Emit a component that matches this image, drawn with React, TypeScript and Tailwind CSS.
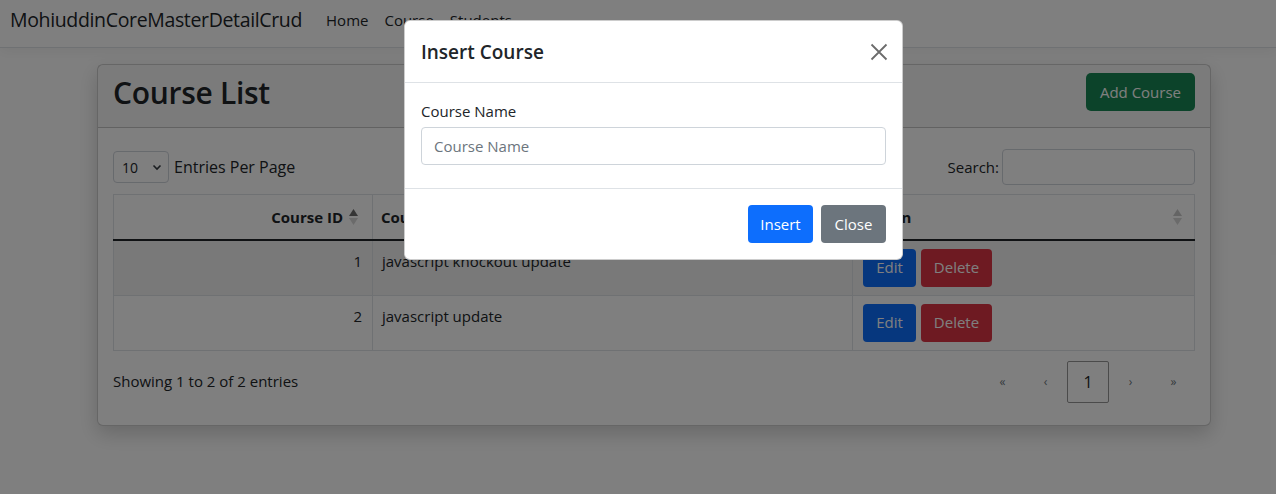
import React from "react";

const font = { fontFamily: '"Open Sans", "Noto Sans", sans-serif' };

function SortIcon({ active }: { active?: "asc" | "desc" }) {
  return (
    <svg width="9" height="20" viewBox="0 0 9 20" className="shrink-0">
      <path d="M4.5 2 L9 9 L0 9 Z" fill={active === "asc" ? "#6b6b6b" : "#c9c9c9"} />
      <path d="M4.5 18 L9 11 L0 11 Z" fill={active === "desc" ? "#6b6b6b" : "#d6d6d6"} />
    </svg>
  );
}

const rows = [
  { id: 1, name: "javascript knockout update" },
  { id: 2, name: "javascript update" },
];

export default function App() {
  return (
    <div className="relative w-[1276px] h-[494px] overflow-hidden bg-white text-[#212529]" style={font}>
      {/* navbar */}
      <nav className="h-[48px] flex items-start pt-[5px] pl-[10px] bg-white border-b border-[#dee2e6] shadow-[0_4px_12px_rgba(0,0,0,0.05)]">
        <span className="text-[19.5px] leading-[30px] tracking-[-0.35px]">MohiuddinCoreMasterDetailCrud</span>
        <div className="flex ml-[16px] text-[15px] leading-[30px] gap-[16px] pl-[8px]">
          <span>Home</span>
          <span>Course</span>
          <span>Students</span>
        </div>
      </nav>

      {/* card */}
      <div className="ml-[97px] mt-[16px] w-[1114px] border border-black/20 rounded-[6px] shadow-[0_8px_20px_rgba(0,0,0,0.18)] bg-white">
        <div className="h-[63px] flex items-start justify-between pl-[15px] pr-[15px] pt-[7px] bg-black/[0.03] border-b border-black/20">
          <h1 className="text-[30px] font-semibold leading-[42px] tracking-[-0.3px]">Course List</h1>
          <button className="mt-[1px] h-[38px] px-[14px] rounded-[5px] bg-[#198754] text-white text-[15px]">Add Course</button>
        </div>

        <div className="pl-[15px] pr-[15px] pt-[21px] pb-[22px]">
          <div className="flex items-center justify-between h-[36px]">
            <div className="flex items-center gap-[5px]">
              <div className="w-[56px] h-[32px] border border-[#ced4da] rounded-[4px] flex items-center justify-between pl-[8px] pr-[6px] text-[14px]">
                <span>10</span>
                <svg width="10" height="8" viewBox="0 0 10 8">
                  <path d="M1.5 2.5 L5 6 L8.5 2.5" stroke="#343a40" strokeWidth="1.6" fill="none" />
                </svg>
              </div>
              <span className="text-[16px]">Entries Per Page</span>
            </div>
            <div className="flex items-center gap-[3px]">
              <span className="text-[15px]">Search:</span>
              <div className="w-[193px] h-[36px] border border-[#ced4da] rounded-[4px]" />
            </div>
          </div>

          <table className="mt-[9px] w-full border-collapse text-[15px]">
            <thead>
              <tr className="h-[45px]">
                <th className="w-[259px] border border-[#dee2e6] border-b-2 border-b-[#212529] pr-[14px] font-bold">
                  <div className="flex items-center justify-end gap-[6px]">
                    <span>Course ID</span>
                    <SortIcon active="asc" />
                  </div>
                </th>
                <th className="w-[480px] border border-[#dee2e6] border-b-2 border-b-[#212529] px-[8px] font-bold">
                  <div className="flex items-center justify-between">
                    <span>Course Name</span>
                    <SortIcon />
                  </div>
                </th>
                <th className="border border-[#dee2e6] border-b-2 border-b-[#212529] pl-[10px] pr-[12px] font-bold">
                  <div className="flex items-center justify-between">
                    <span>Action</span>
                    <SortIcon />
                  </div>
                </th>
              </tr>
            </thead>
            <tbody>
              {rows.map((r, i) => (
                <tr key={r.id} className={i % 2 === 0 ? "bg-black/[0.05]" : ""}>
                  <td className="h-[55px] border border-[#dee2e6] px-[10px] pt-[8px] align-top text-right leading-[24px]">{r.id}</td>
                  <td className="border border-[#dee2e6] px-[9px] pt-[8px] align-top leading-[24px]">{r.name}</td>
                  <td className="border border-[#dee2e6] px-[10px] py-[8px] align-top">
                    <div className="flex gap-[5px]">
                      <button className="h-[38px] w-[53px] rounded-[4px] bg-[#0d6efd] text-white text-[15px]">Edit</button>
                      <button className="h-[38px] w-[71px] rounded-[4px] bg-[#dc3545] text-white text-[15px]">Delete</button>
                    </div>
                  </td>
                </tr>
              ))}
            </tbody>
          </table>

          <div className="flex items-center justify-between mt-[10px]">
            <span className="text-[15px]">Showing 1 to 2 of 2 entries</span>
            <div className="flex items-center text-[12px] text-[#6c757d]">
              <span className="w-[43px] h-[42px] flex items-center justify-center">«</span>
              <span className="w-[43px] h-[42px] flex items-center justify-center">‹</span>
              <span className="w-[42px] h-[42px] flex items-center justify-center border border-[#979797] rounded-[2px] bg-white text-[16px] text-[#212529]">1</span>
              <span className="w-[43px] h-[42px] flex items-center justify-center">›</span>
              <span className="w-[43px] h-[42px] flex items-center justify-center">»</span>
            </div>
          </div>
        </div>
      </div>

      {/* backdrop */}
      <div className="absolute inset-0 bg-black/50" />

      {/* modal */}
      <div className="absolute left-[404px] top-[20px] w-[499px] bg-white rounded-[6px] border border-black/20">
        <div className="h-[62px] flex items-center justify-between pl-[16px] pr-[14px] border-b border-[#dee2e6]">
          <h5 className="text-[19px] font-semibold leading-[30px]">Insert Course</h5>
          <svg width="18" height="18" viewBox="0 0 18 18">
            <path d="M1.5 1.5 L16.5 16.5 M16.5 1.5 L1.5 16.5" stroke="#6c6c6c" strokeWidth="1.8" />
          </svg>
        </div>
        <div className="px-[16px] pt-[16px] pb-[23px] border-b border-[#dee2e6]">
          <label className="block text-[15px] leading-[24px] mb-[4px]">Course Name</label>
          <div className="h-[38px] border border-[#ced4da] rounded-[4px] flex items-center px-[12px] text-[15px] text-[#6c757d]">
            Course Name
          </div>
        </div>
        <div className="flex justify-end gap-[8px] px-[16px] pt-[16px] pb-[16px]">
          <button className="h-[38px] w-[65px] rounded-[4px] bg-[#0d6efd] text-white text-[15px]">Insert</button>
          <button className="h-[38px] w-[65px] rounded-[4px] bg-[#6c757d] text-white text-[15px]">Close</button>
        </div>
      </div>
    </div>
  );
}
